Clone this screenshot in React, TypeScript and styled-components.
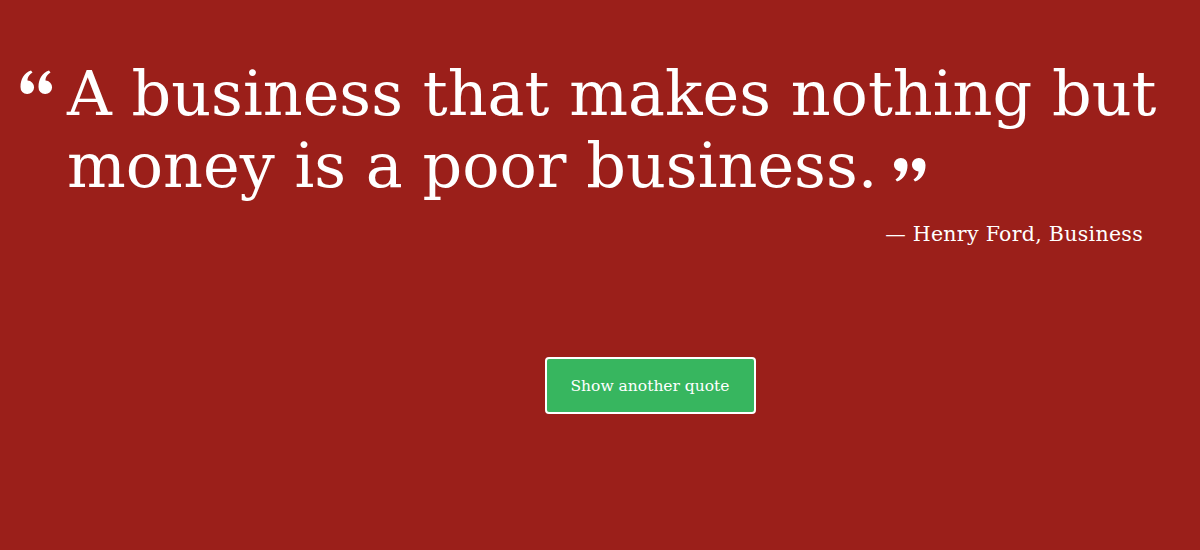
import React, { FC } from 'react';
import styled, { createGlobalStyle } from 'styled-components';

const GlobalStyle = createGlobalStyle`
	html, body {
		margin: 0;
		padding: 0;
		background: #9b1f1a;
	}
	body {
		font-family: 'DejaVu Serif', 'Liberation Serif', serif;
		color: #fff;
	}
`;

const Page = styled.div`
	width: 1200px;
	height: 550px;
	background: #9b1f1a;
	box-sizing: border-box;
	padding: 58px 40px 0 20px;
	display: flex;
	flex-direction: column;
`;

const QuoteBox = styled.div`
	display: flex;
	align-items: flex-start;
	gap: 14px;
`;

const OpenMark = styled.svg`
	flex: none;
	width: 33px;
	height: 25px;
	margin-top: 12px;
`;

const QuoteText = styled.p`
	margin: 0;
	font-size: 62px;
	line-height: 72px;
	font-weight: 400;
	color: #fff;
`;

const CloseMark = styled.svg`
	display: inline-block;
	width: 33px;
	height: 25px;
	margin-left: 16px;
	vertical-align: 5px;
`;

const Author = styled.div`
	margin-top: 20px;
	padding-right: 17px;
	text-align: right;
	font-size: 20.5px;
	letter-spacing: 0.3px;
`;

const ButtonRow = styled.div`
	display: flex;
	justify-content: center;
	margin-top: 111px;
	padding-left: 120px;
`;

const QuoteButton = styled.button`
	width: 211px;
	height: 57px;
	background: #37b65f;
	color: #fff;
	border: 2px solid #fff;
	border-radius: 4px;
	font-family: 'DejaVu Serif', serif;
	font-size: 15.5px;
	cursor: pointer;
`;

// one "6"-shaped mark, 14 wide, 24 tall
const mark = 'M0.5 17C0.5 9 4 3 11 0.5L12.5 2.5C8.5 5 7.5 8 7.5 10.5A6.8 6.8 0 1 1 0.5 17Z';

const App: FC = () => {
	return (
		<>
			<GlobalStyle />
			<Page>
				<QuoteBox>
					<OpenMark viewBox="0 0 33 25">
						<path d={mark} fill="#fff" />
						<path d={mark} fill="#fff" transform="translate(18 0)" />
					</OpenMark>
					<QuoteText>
						A business that makes nothing but money is a poor business.
						<CloseMark viewBox="0 0 33 25">
							<g transform="rotate(180 16.5 12.5)">
								<path d={mark} fill="#fff" />
								<path d={mark} fill="#fff" transform="translate(18 0)" />
							</g>
						</CloseMark>
					</QuoteText>
				</QuoteBox>
				<Author>— Henry Ford, Business</Author>
				<ButtonRow>
					<QuoteButton>Show another quote</QuoteButton>
				</ButtonRow>
			</Page>
		</>
	);
};

export default App;
